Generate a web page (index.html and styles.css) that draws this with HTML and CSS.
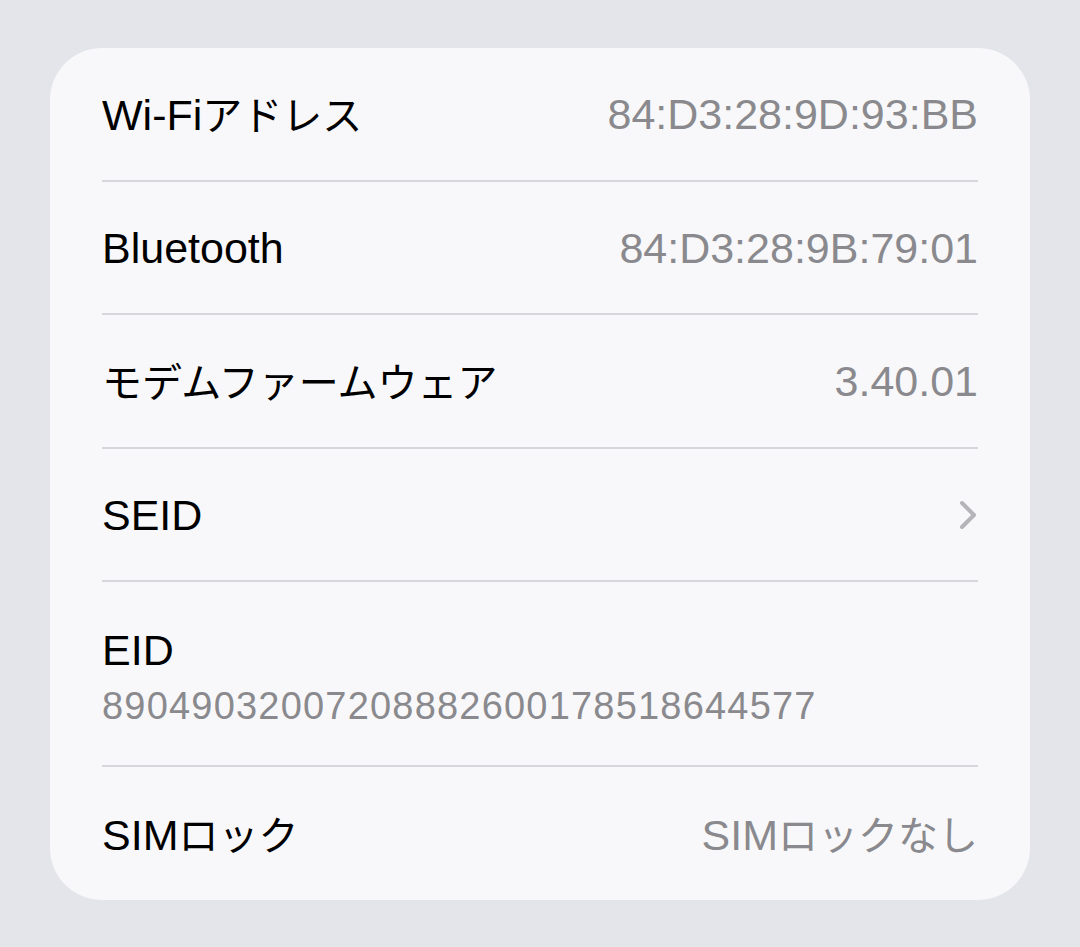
FILE: index.html
```html
<!DOCTYPE html>
<html lang="ja">
<head>
<meta charset="utf-8">
<title>情報</title>
<link rel="stylesheet" href="styles.css">
</head>
<body>
<div class="page">
  <div class="card">
    <div class="row">
      <span class="label">Wi-Fi<span class="ja">アドレス</span></span>
      <span class="value">84:D3:28:9D:93:BB</span>
    </div>
    <div class="row">
      <span class="label">Bluetooth</span>
      <span class="value">84:D3:28:9B:79:01</span>
    </div>
    <div class="row">
      <span class="label"><span class="ja">モデムファームウェア</span></span>
      <span class="value">3.40.01</span>
    </div>
    <div class="row">
      <span class="label">SEID</span>
      <svg class="chevron" width="18" height="30" viewBox="0 0 18 30"><path d="M3 3 L15 15 L3 27" fill="none" stroke="#b4b4b9" stroke-width="4" stroke-linecap="round" stroke-linejoin="round"/></svg>
    </div>
    <div class="row stacked">
      <span class="label">EID</span>
      <span class="sub">89049032007208882600178518644577</span>
    </div>
    <div class="row last">
      <span class="label">SIM<span class="ja">ロック</span></span>
      <span class="value">SIM<span class="ja">ロックなし</span></span>
    </div>
  </div>
</div>
</body>
</html>
```

FILE: styles.css
```css
html, body {
  margin: 0;
  padding: 0;
  background: #e4e5ea;
}
.page {
  width: 1080px;
  height: 947px;
  padding: 48px 50px 0 50px;
  box-sizing: border-box;
}
.card {
  background: #f8f8fa;
  border-radius: 52px;
  height: 852px;
  padding: 0 52px;
  box-sizing: border-box;
  display: flex;
  flex-direction: column;
  font-family: "Liberation Sans", "Noto Sans CJK JP", sans-serif;
}
.row {
  height: 134px;
  flex: none;
  box-sizing: border-box;
  border-bottom: 2px solid #d6d6db;
  display: flex;
  align-items: center;
  justify-content: space-between;
}
.row:nth-child(even) {
  height: 133px;
}
.row.last {
  border-bottom: none;
  flex: 1;
}
.label {
  font-size: 43px;
  line-height: 52px;
  color: #000;
}
.value {
  font-size: 43px;
  line-height: 52px;
  color: #8a8a8e;
}
.ja {
  font-family: "Noto Sans CJK JP", sans-serif;
  font-size: 40px;
}
.chevron {
  display: block;
  margin-right: 1px;
}
.row.stacked {
  height: 185px;
  flex-direction: column;
  align-items: flex-start;
  justify-content: flex-start;
  padding-top: 42px;
}
.sub {
  font-size: 38px;
  line-height: 61px;
  letter-spacing: 1.2px;
  color: #8a8a8e;
}
```
